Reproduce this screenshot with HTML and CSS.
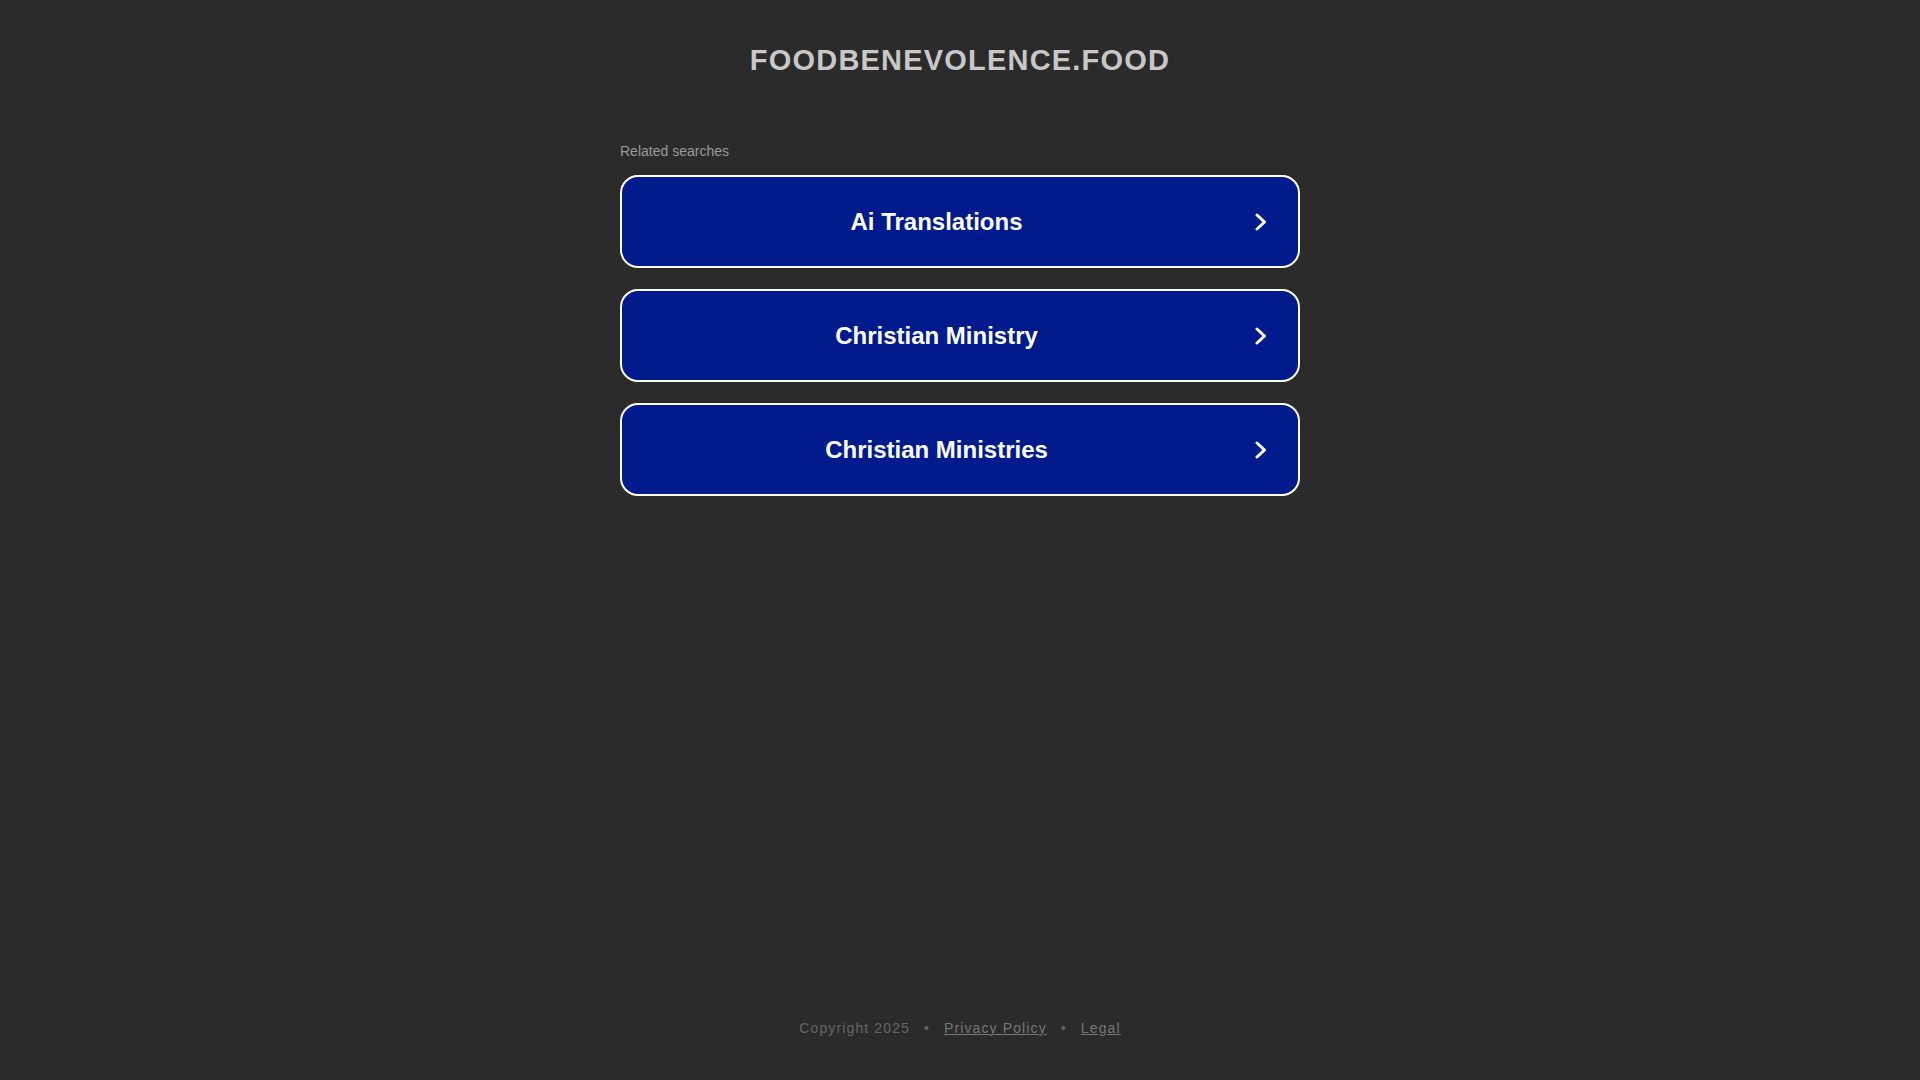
FILE: index.html
```html
<!DOCTYPE html>
<html lang="en">
<head>
    <meta charset="UTF-8">
    <meta name="viewport" content="width=device-width, initial-scale=1.0">
    <title>foodbenevolence.food</title>
<link rel="stylesheet" href="styles.css">
</head>
<body>
    <div class="page">
        <header class="header">
            <h1 class="domain">foodbenevolence.food</h1>
        </header>

        <main class="searches">
            <p class="searches-title">Related searches</p>
            <a class="search-card" href="#">
                <span class="search-label">Ai Translations</span>
                <svg class="chevron" width="12" height="18" viewBox="0 0 12 18"><path d="M2 2 L9.5 9 L2 16" fill="none" stroke="#fff" stroke-width="3" stroke-linecap="round" stroke-linejoin="round"/></svg>
            </a>
            <a class="search-card" href="#">
                <span class="search-label">Christian Ministry</span>
                <svg class="chevron" width="12" height="18" viewBox="0 0 12 18"><path d="M2 2 L9.5 9 L2 16" fill="none" stroke="#fff" stroke-width="3" stroke-linecap="round" stroke-linejoin="round"/></svg>
            </a>
            <a class="search-card" href="#">
                <span class="search-label">Christian Ministries</span>
                <svg class="chevron" width="12" height="18" viewBox="0 0 12 18"><path d="M2 2 L9.5 9 L2 16" fill="none" stroke="#fff" stroke-width="3" stroke-linecap="round" stroke-linejoin="round"/></svg>
            </a>
        </main>

        <footer class="footer">
            <span>Copyright 2025</span>
            <span class="dot">&bull;</span>
            <a href="#">Privacy Policy</a>
            <span class="dot">&bull;</span>
            <a href="#">Legal</a>
        </footer>
    </div>
</body>
</html>
```
FILE: styles.css
```css
body {
    margin: 0;
    background-color: #2b2b2b;
    font-family: 'Liberation Sans', Arial, sans-serif;
    color: #ccc;
}

.page {
    min-height: 100vh;
    display: flex;
    flex-direction: column;
    align-items: center;
}

.header {
    padding-top: 43px;
}

.domain {
    margin: 0;
    font-size: 29px;
    line-height: 34px;
    font-weight: bold;
    text-transform: uppercase;
    letter-spacing: 1.2px;
    color: #c8c8c8;
}

.searches {
    width: 680px;
    margin-top: 66px;
    display: flex;
    flex-direction: column;
    gap: 21px;
}

.searches-title {
    margin: 0 0 -5px;
    font-size: 14px;
    line-height: 16px;
    color: #9a9a9a;
}

.search-card {
    height: 89px;
    display: flex;
    align-items: center;
    background-color: #011a8c;
    border: 2px solid #fff;
    border-radius: 18px;
    text-decoration: none;
    padding-right: 31px;
}

.search-label {
    flex: 1;
    text-align: center;
    font-size: 24px;
    font-weight: bold;
    color: #fff;
}

.chevron {
    margin-left: 4px;
}

.footer {
    margin-top: auto;
    padding-bottom: 43px;
    display: flex;
    gap: 14px;
    font-size: 14px;
    line-height: 18px;
    letter-spacing: 1.12px;
    color: #666;
}

.footer a {
    color: #777;
}

.dot {
    color: #666;
}
```
